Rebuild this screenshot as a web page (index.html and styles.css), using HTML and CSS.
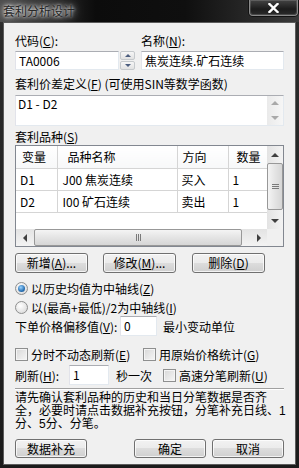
FILE: index.html
```html
<!DOCTYPE html>
<html lang="zh-CN">
<head>
    <meta charset="UTF-8">
    <meta name="viewport" content="width=device-width, initial-scale=1.0">
    <title>套利分析设计</title>
    <link rel="stylesheet" href="styles.css">
</head>
<body>
    <div class="window">
        <div class="titlebar">
            <span class="title">套利分析设计</span>
            <div class="close-btn">
                <svg width="11" height="10" viewBox="0 0 11 10"><path d="M1.5 1 L9.5 9 M9.5 1 L1.5 9" stroke="#fff" stroke-width="2.4" stroke-linecap="square"/></svg>
            </div>
        </div>
        <div class="client">
            <div class="top-row">
                <div class="code-field">
                    <div class="lbl">代码(<u>C</u>):</div>
                    <div class="spin-edit">
                        <div class="edit code-edit">TA0006</div>
                        <div class="spin">
                            <span class="spin-btn"><i class="arr up tiny"></i></span>
                            <span class="spin-btn"><i class="arr down tiny"></i></span>
                        </div>
                    </div>
                </div>
                <div class="name-field">
                    <div class="lbl">名称(<u>N</u>):</div>
                    <div class="edit">焦炭连续.矿石连续</div>
                </div>
            </div>

            <div class="lbl sec-formula">套利价差定义(<u>F</u>) (可使用SIN等数学函数)</div>
            <div class="memo">
                <div class="memo-text">D1 - D2</div>
                <div class="memo-scroll">
                    <i class="arr up light"></i>
                    <i class="arr down light"></i>
                </div>
            </div>

            <div class="lbl sec-list">套利品种(<u>S</u>)</div>
            <div class="listview">
                <div class="grid-area">
                    <table class="items">
                        <thead>
                            <tr><th class="c-var">变量</th><th class="c-name">品种名称</th><th class="c-dir">方向</th><th class="c-qty">数量</th></tr>
                        </thead>
                        <tbody>
                            <tr><td>D1</td><td>J00 焦炭连续</td><td>买入</td><td>1</td></tr>
                            <tr><td>D2</td><td>I00 矿石连续</td><td>卖出</td><td>1</td></tr>
                        </tbody>
                    </table>
                </div>
                <div class="vscroll">
                    <span class="sb-btn"><i class="arr up"></i></span>
                    <span class="v-thumb"><i class="grip-h"></i></span>
                    <span class="v-track"></span>
                    <span class="sb-btn"><i class="arr down"></i></span>
                </div>
                <div class="hscroll">
                    <span class="sb-btn"><i class="arr left"></i></span>
                    <span class="h-thumb"><i class="grip-v"></i></span>
                    <span class="h-track"></span>
                    <span class="sb-btn"><i class="arr right"></i></span>
                </div>
                <div class="corner"></div>
            </div>

            <div class="btn-row">
                <button class="btn">新增(<u>A</u>)...</button>
                <button class="btn">修改(<u>M</u>)...</button>
                <button class="btn">删除(<u>D</u>)</button>
            </div>

            <div class="opt-row radio-first">
                <span class="radio checked"></span>
                <span>以历史均值为中轴线(<u>Z</u>)</span>
            </div>
            <div class="opt-row radio-second">
                <span class="radio"></span>
                <span>以(最高+最低)/2为中轴线(<u>I</u>)</span>
            </div>

            <div class="field-row offset-row">
                <span class="offset-lbl">下单价格偏移值(<u>V</u>):</span>
                <div class="edit small-edit offset-edit">0</div>
                <span class="unit">最小变动单位</span>
            </div>

            <div class="opt-row check-row">
                <span class="check-item first">
                    <span class="check"></span>
                    <span>分时不动态刷新(<u>E</u>)</span>
                </span>
                <span class="check-item">
                    <span class="check"></span>
                    <span>用原始价格统计(<u>G</u>)</span>
                </span>
            </div>

            <div class="field-row refresh-row">
                <span class="refresh-lbl">刷新(<u>H</u>):</span>
                <div class="edit small-edit refresh-edit">1</div>
                <span class="per-sec">秒一次</span>
                <span class="check-item fast">
                    <span class="check"></span>
                    <span>高速分笔刷新(<u>U</u>)</span>
                </span>
            </div>

            <div class="separator"></div>

            <p class="note">请先确认套利品种的历史和当日分笔数据是否齐<br>全，必要时请点击数据补充按钮，分笔补充日线、1<br>分、5分、分笔。</p>

            <div class="bottom-row">
                <button class="btn">数据补充</button>
                <button class="btn ok">确定</button>
                <button class="btn">取消</button>
            </div>
        </div>
    </div>
</body>
</html>
```

FILE: styles.css
```css
* {
    box-sizing: border-box;
}
body {
    margin: 0;
    background-color: #000;
    font-family: "Noto Sans CJK SC", sans-serif;
    font-size: 12px;
    color: #000;
}
u {
    text-decoration: underline;
}
.window {
    width: 299px;
    height: 468px;
    display: flex;
    flex-direction: column;
    padding: 0 3px 3px;
    background: linear-gradient(to bottom, #2c2c2c, #1b1b1b);
}

/* title bar */
.titlebar {
    height: 22px;
    margin: 0 -3px;
    display: flex;
    justify-content: space-between;
    align-items: flex-start;
    background: linear-gradient(to right, #4a4a4a 0, #2e2e2e 14%, #0c0c0c 32%, #0f0f0f 62%, #262626 82%, #3a3a3a 100%);
}
.title {
    padding-left: 3px;
    line-height: 21px;
    color: #262626;
    text-shadow: 0 0 3px #fff, 0 0 7px rgba(255, 255, 255, 0.85), 0 0 14px rgba(255, 255, 255, 0.6);
}
.close-btn {
    width: 49px;
    height: 16px;
    margin-right: 1px;
    display: flex;
    justify-content: center;
    align-items: center;
    border: 1px solid #8a8a8a;
    border-top: none;
    border-radius: 0 0 4px 4px;
    background: linear-gradient(to bottom, #444, #1c1c1c 60%, #2a2a2a);
    box-shadow: 0 0 0 1px #111, inset 0 0 0 1px rgba(255, 255, 255, 0.15);
}

/* client area */
.client {
    flex: 1;
    display: flex;
    flex-direction: column;
    padding: 11px 11px 0;
    background-color: #f0f0f0;
    border: 1px solid #5c5c5c;
}
.lbl {
    height: 14px;
    line-height: 14px;
    white-space: nowrap;
}
.edit {
    height: 19px;
    padding: 0 3px;
    line-height: 17px;
    background-color: #fff;
    border: 1px solid;
    border-color: #abadb3 #e3e9ef #e3e9ef #e2e3ea;
    white-space: nowrap;
    overflow: hidden;
}
.top-row {
    display: flex;
}
.code-field {
    width: 120px;
}
.name-field {
    flex: 1;
    margin-left: 6px;
}
.top-row .edit,
.spin-edit {
    margin-top: 3px;
}
.spin-edit {
    display: flex;
}
.spin-edit .edit {
    margin-top: 0;
    width: 104px;
}
.spin {
    width: 15px;
    height: 19px;
    margin-left: 1px;
    display: flex;
    flex-direction: column;
    gap: 1px;
}
.spin-btn {
    flex: 1;
    display: flex;
    justify-content: center;
    align-items: center;
    border: 1px solid #c5c9cc;
    border-radius: 2px;
    background: linear-gradient(to bottom, #f6f6f6, #e2e2e2);
}

/* arrows */
.arr {
    display: block;
    width: 0;
    height: 0;
}
.arr.up {
    border-left: 4px solid transparent;
    border-right: 4px solid transparent;
    border-bottom: 4px solid #3f3f3f;
}
.arr.down {
    border-left: 4px solid transparent;
    border-right: 4px solid transparent;
    border-top: 4px solid #3f3f3f;
}
.arr.left {
    border-top: 4px solid transparent;
    border-bottom: 4px solid transparent;
    border-right: 4px solid #3f3f3f;
}
.arr.right {
    border-top: 4px solid transparent;
    border-bottom: 4px solid transparent;
    border-left: 4px solid #3f3f3f;
}
.arr.tiny {
    border-left-width: 3px;
    border-right-width: 3px;
}
.arr.tiny.up {
    border-bottom: 3px solid #4b5d7e;
}
.arr.tiny.down {
    border-top: 3px solid #4b5d7e;
}
.arr.light.up {
    border-bottom-color: #a9a9a9;
}
.arr.light.down {
    border-top-color: #a9a9a9;
}

/* formula memo */
.sec-formula {
    margin-top: 7px;
}
.memo {
    height: 31px;
    margin-top: 4px;
    display: flex;
    background-color: #fff;
    border: 1px solid;
    border-color: #abadb3 #e3e9ef #e3e9ef #e2e3ea;
}
.memo-text {
    flex: 1;
    padding: 1px 2px;
    line-height: 14px;
}
.memo-scroll {
    width: 16px;
    display: flex;
    flex-direction: column;
    justify-content: space-between;
    align-items: center;
    padding: 5px 0 5px;
    background: linear-gradient(to right, #eaeaea, #f6f6f6);
}

/* list view */
.sec-list {
    margin-top: 4px;
}
.listview {
    height: 102px;
    margin-top: 1px;
    display: grid;
    grid-template-columns: 1fr 16px;
    grid-template-rows: 1fr 17px;
    border: 1px solid #828790;
    background-color: #fff;
}
.grid-area {
    overflow: hidden;
}
.items {
    width: 251px;
    border-collapse: collapse;
    table-layout: fixed;
}
.items th {
    height: 22px;
    padding: 0 0 0 6px;
    font-weight: normal;
    text-align: left;
    background: linear-gradient(to bottom, #fff, #f7f8f9);
    border-right: 1px solid #d5d5d5;
    border-bottom: 1px solid #d5d5d5;
}
.items th.c-name {
    padding-left: 10px;
}
.items th.c-dir {
    padding-left: 5px;
}
.items th.c-qty {
    padding-left: 8px;
    border-right: none;
}
.c-var { width: 41px; }
.c-name { width: 120px; }
.c-dir { width: 51px; }
.c-qty { width: 39px; }
.items td {
    height: 22px;
    padding: 0 0 0 4px;
    border-right: 1px solid #d5d5d5;
    border-bottom: 1px solid #d5d5d5;
    white-space: nowrap;
}
.items td:nth-child(2) {
    padding-left: 5px;
}
.items td:last-child {
    border-right: none;
}
.vscroll {
    display: flex;
    flex-direction: column;
    background: linear-gradient(to right, #e3e3e3, #f3f3f3);
}
.hscroll {
    display: flex;
    background: linear-gradient(to bottom, #e3e3e3, #f3f3f3);
}
.corner {
    background-color: #f0f0f0;
}
.sb-btn {
    width: 16px;
    height: 17px;
    flex: none;
    display: flex;
    justify-content: center;
    align-items: center;
}
.hscroll .sb-btn {
    width: 17px;
    height: 17px;
}
.v-thumb {
    height: 47px;
    display: flex;
    justify-content: center;
    align-items: center;
    border: 1px solid #989898;
    border-radius: 2px;
    background: linear-gradient(to right, #f4f4f4, #e4e4e4 50%, #d6d6d6);
}
.v-track {
    flex: 1;
}
.h-thumb {
    width: 208px;
    margin-left: 1px;
    display: flex;
    justify-content: center;
    align-items: center;
    border: 1px solid #989898;
    border-radius: 2px;
    background: linear-gradient(to bottom, #f4f4f4, #e4e4e4 50%, #d6d6d6);
}
.h-track {
    flex: 1;
}
.grip-h {
    width: 7px;
    height: 1px;
    margin-top: -4px;
    background-color: #7a7a7a;
    box-shadow: 0 2px 0 #7a7a7a, 0 4px 0 #7a7a7a;
}
.grip-v {
    width: 1px;
    height: 7px;
    margin-left: -4px;
    background-color: #7a7a7a;
    box-shadow: 2px 0 0 #7a7a7a, 4px 0 0 #7a7a7a;
}

/* buttons */
.btn-row {
    margin-top: 6px;
    display: flex;
    gap: 15px;
}
.btn {
    width: 73px;
    height: 20px;
    padding: 0;
    font-family: inherit;
    font-size: 12px;
    line-height: 18px;
    color: #000;
    text-align: center;
    border: 1px solid #707070;
    border-radius: 3px;
    background: linear-gradient(to bottom, #f2f2f2 0, #ebebeb 50%, #dddddd 50%, #cfcfcf 100%);
    box-shadow: inset 0 0 0 1px rgba(255, 255, 255, 0.75);
}
.btn-row .btn:last-child {
    margin-left: 1px;
}

/* options */
.opt-row {
    height: 14px;
    display: flex;
    align-items: center;
    white-space: nowrap;
}
.radio-first {
    margin-top: 8px;
}
.radio-second {
    margin-top: 5px;
}
.radio {
    width: 13px;
    height: 13px;
    margin-right: 3px;
    flex: none;
    border-radius: 50%;
    border: 1px solid #8e8f8f;
    background: radial-gradient(circle at 40% 35%, #fff, #dcdcdc 80%);
    display: flex;
    justify-content: center;
    align-items: center;
}
.radio.checked::after {
    content: "";
    width: 7px;
    height: 7px;
    border-radius: 50%;
    background: radial-gradient(circle at 40% 35%, #9ad3ff, #2a72b5 60%, #1a4a7a);
}
.check {
    width: 13px;
    height: 13px;
    margin-right: 3px;
    flex: none;
    border: 1px solid #8e8f8f;
    background: linear-gradient(135deg, #d7d7d7, #f6f6f6);
    box-shadow: inset 0 0 0 1px #f4f4f4;
}
.check-item {
    display: flex;
    align-items: center;
}
.check-item.first {
    width: 128px;
}
.field-row {
    height: 20px;
    display: flex;
    align-items: center;
    white-space: nowrap;
}
.small-edit {
    height: 20px;
    line-height: 18px;
}
.offset-row {
    margin-top: 2px;
}
.offset-lbl {
    width: 105px;
}
.offset-edit {
    width: 37px;
}
.unit {
    margin-left: 6px;
}
.check-row {
    margin-top: 11px;
}
.refresh-row {
    margin-top: 4px;
}
.refresh-lbl {
    width: 54px;
}
.refresh-edit {
    width: 40px;
}
.per-sec {
    margin-left: 7px;
}
.check-item.fast {
    margin-left: 11px;
}
.separator {
    height: 2px;
    margin-top: 3px;
    border-top: 1px solid #a0a0a0;
    border-bottom: 1px solid #fff;
}
.note {
    margin: 2px 0 0;
    font-family: "Liberation Sans", "Noto Sans CJK SC", sans-serif;
    line-height: 13px;
    white-space: nowrap;
}
.bottom-row {
    margin-top: 8px;
    display: flex;
}
.bottom-row .btn {
    width: 72px;
    height: 19px;
    line-height: 17px;
}
.bottom-row .ok {
    margin-left: auto;
    margin-right: 6px;
}
```
